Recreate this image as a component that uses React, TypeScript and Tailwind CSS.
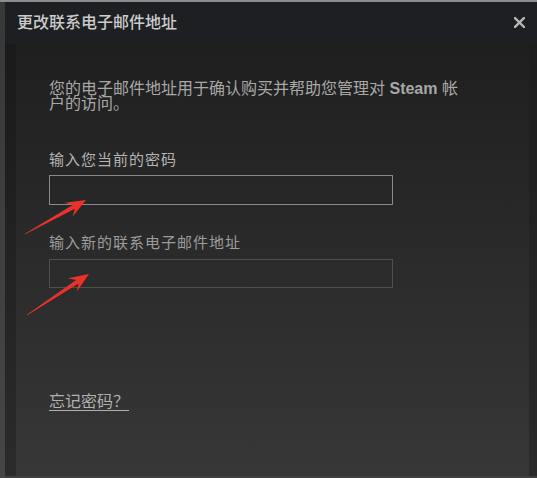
import React from "react";

const Arrow = ({ x1, y1, x2, y2 }: { x1: number; y1: number; x2: number; y2: number }) => {
  // tapered annotation arrow pointing from (x1,y1) to (x2,y2)
  const dx = x2 - x1;
  const dy = y2 - y1;
  const len = Math.sqrt(dx * dx + dy * dy);
  const ux = dx / len;
  const uy = dy / len;
  const px = -uy;
  const py = ux;
  const head = 20;
  const hw = 8;
  const bx = x2 - ux * head;
  const by = y2 - uy * head;
  const nx = x2 - ux * (head - 6);
  const ny = y2 - uy * (head - 6);
  const pts = [
    [x1 - px * 0.4, y1 - py * 0.4],
    [x1 + px * 0.4, y1 + py * 0.4],
    [nx + px * 2.2, ny + py * 2.2],
    [bx + px * hw, by + py * hw],
    [x2, y2],
    [bx - px * hw, by - py * hw],
    [nx - px * 2.2, ny - py * 2.2],
  ]
    .map((p) => p.join(","))
    .join(" ");
  return <polygon points={pts} fill="#e8322b" />;
};

export default function App() {
  return (
    <div
      className="relative flex h-[478px] w-[537px] overflow-hidden border-t-2 border-[#8c8c8c] bg-[#2a2a2a]"
      style={{ fontFamily: '"Liberation Sans", "Noto Sans CJK SC", sans-serif' }}
    >
      {/* left edge */}
      <div className="w-[5px] bg-gradient-to-b from-[#383838] to-[#464646]" />

      <div className="flex flex-1 flex-col border-b-2 border-[#404040]">
        {/* header */}
        <div className="flex h-[42px] items-center justify-between bg-[#1e1f23] pl-[12px] pr-[11px]">
          <span className="text-[16px] font-medium text-[#cbcbcb]">更改联系电子邮件地址</span>
          <button className="mb-[2px] flex h-[14px] w-[14px] items-center justify-center">
            <svg width="11" height="11" viewBox="0 0 11 11">
              <path d="M1 1 L10 10 M10 1 L1 10" stroke="#b8b8b8" strokeWidth="2.4" strokeLinecap="square" />
            </svg>
          </button>
        </div>

        {/* body */}
        <div className="flex flex-1">
          <div className="w-[11px] bg-gradient-to-b from-[#1a1a1a] to-[#2b2b2b]" />
          <div className="flex flex-1 flex-col bg-gradient-to-b from-[#1f1f1f] to-[#373737] pl-[33px]">
            <p className="mt-[37px] w-[415px] text-[16px] leading-[15px] text-[#a8a8a8]">
              您的电子邮件地址用于确认购买并帮助您管理对 <span className="font-bold">Steam</span> 帐户的访问。
            </p>

            <label className="mt-[40px] text-[15px] leading-[17px] tracking-[1px] text-[#b4b4b4]">
              输入您当前的密码
            </label>
            <input
              type="password"
              className="mt-[7px] h-[30px] w-[344px] border border-[#8a8a8a] bg-transparent px-2 text-[#ccc] outline-none"
            />

            <label className="mt-[29px] text-[15px] leading-[17px] tracking-[1px] text-[#9c9c9c]">
              输入新的联系电子邮件地址
            </label>
            <input
              type="text"
              className="mt-[8px] h-[29px] w-[344px] border border-[#4f4f4f] bg-transparent px-2 text-[#ccc] outline-none"
            />

            <a className="mt-[105px] w-fit text-[16px] leading-[17px] text-[#b0b0b0] underline underline-offset-[3px]">
              忘记密码？
            </a>
          </div>
          <div className="w-[8px] bg-gradient-to-b from-[#1d1d1d] to-[#2a2a2a]" />
        </div>
      </div>

      {/* annotation arrows */}
      <svg className="pointer-events-none absolute left-0 top-0" width="537" height="478">
        <Arrow x1={25} y1={232} x2={86} y2={198} />
        <Arrow x1={27} y1={313} x2={89} y2={272} />
      </svg>
    </div>
  );
}
